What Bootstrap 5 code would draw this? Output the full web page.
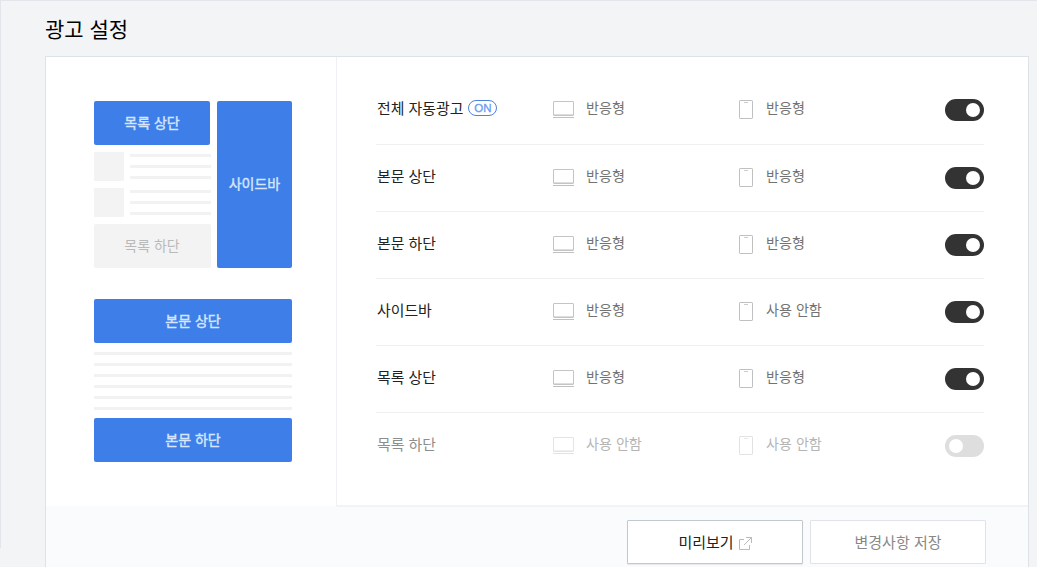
<!DOCTYPE html>
<html lang="ko">
<head>
<meta charset="utf-8">
<meta name="viewport" content="width=device-width, initial-scale=1">
<title>광고 설정</title>
<link href="https://cdn.jsdelivr.net/npm/bootstrap@5.3.0/dist/css/bootstrap.min.css" rel="stylesheet">
<style>
body{background:#f3f4f6;font-family:"Noto Sans CJK KR",sans-serif;color:#333;height:567px;overflow:hidden}
.page-frame{height:548px;border-top:1px solid #e3e5ea;border-left:1px solid #e3e5ea;padding:0 8px 0 44px}
.page-title{font-size:21px;line-height:30px;margin:0;padding:12px 0 13px;color:#000;font-weight:400}
.panel{border:1px solid #dfe1e8;height:530px;background:#fafbfd}
.panel-main{height:449px;background:#fff}
.preview{width:290px;flex:none;padding:44px 44px 0 48px}
.settings{border-left:1px solid #f0f1f4;border-bottom:2px solid #f2f3f5;padding:20px 44px 0 39px;margin-bottom:-1px}
.slot{background:#3e7ee9;color:#d5e6fd;font-size:14px;-webkit-text-stroke:.4px #d5e6fd;border-radius:2px;height:44px;display:flex;align-items:center;justify-content:center;padding-bottom:2px}
.slot.is-off{background:#f3f3f3;color:#b9b9b9;-webkit-text-stroke:0;width:117px;margin-top:7px;padding-right:1px}
.slot-list{width:116px}
.slot-side{width:75px;height:167px}
.post{margin-top:7px;gap:6px}
.thumb{width:30px;height:29px;background:#f3f3f3;border-radius:1px;flex:none}
.text-line{height:3px;background:#f2f2f2}
.post-lines{width:81px;flex:none;gap:8px;padding-top:2px}
.body-lines{gap:8px;padding:9px 0 8px}
.article{padding-top:31px}
.ad-row{height:67px;border-bottom:1px solid #f0f0f2;display:grid;grid-template-columns:176px 186px 1fr auto;align-items:start}
.ad-row:first-child{height:68px}
.ad-row:last-child{border:0}
.ad-name{font-size:14.9px;line-height:22px;padding:20px 0 0 1px;color:#222}
.ad-mode{font-size:14.1px;line-height:22px;padding-top:19px;color:#737373}
.ad-mode svg{flex:none}
.pc-icon{margin:5px 12px 0 1px}
.mo-icon{margin:4px 13px 0 1px}
.on-mark{font:400 11.5px/14px "Liberation Sans",sans-serif;color:#6b9af0;border:1px solid #4d82dc;border-radius:8px;width:29px;height:16px;margin:3px 0 0 5px;text-align:center;-webkit-text-stroke:.3px #6b9af0}
.toggle{appearance:none;width:39px;height:22px;border-radius:11px;background:#dedede;margin:22px 0 0;padding:4px;display:flex}
.toggle::before{content:"";width:14px;height:14px;border-radius:50%;background:#fff}
.toggle:checked{background:#333;justify-content:flex-end}
.is-disabled .ad-name{color:#8e8e8e}
.is-disabled .ad-mode{color:#b5b5b5}
.is-disabled svg{opacity:.45}
.actions{padding:14px 42px 0 0;gap:7px}
.action-btn{width:176px;height:44px;border:1px solid #e1e3e9;border-radius:1px;background:#fff;font-size:15px;line-height:42px;padding:0;color:#888}
.action-btn.is-primary{border-color:#c3c7ce;color:#222;box-shadow:0 1px 1px #e6e8ec}
.ext-icon{margin:2px 0 0 5px}
</style>
</head>
<body>
<svg class="d-none">
  <symbol id="pc" viewBox="0 0 21 18"><rect x=".5" y=".5" width="20" height="14" rx=".5" fill="none" stroke="#c4c4c4"/><path d="M1 13.5h19" stroke="#dedede"/><path d="M0 16.5h21" stroke="#c0c0c0"/></symbol>
  <symbol id="mo" viewBox="0 0 14 19"><rect x=".5" y=".5" width="13" height="18" rx=".6" fill="none" stroke="#c0c0c0"/><path d="M5 2.5h4" stroke="#ccc"/></symbol>
</svg>
<div class="page-frame">
  <h1 class="page-title">광고 설정</h1>
  <main class="panel">
    <div class="panel-main d-flex">
      <section class="preview">
        <div class="d-flex justify-content-between">
          <div class="slot-list">
            <div class="slot">목록 상단</div>
            <div class="post d-flex"><div class="thumb"></div><div class="post-lines d-flex flex-column"><div class="text-line"></div><div class="text-line"></div><div class="text-line"></div></div></div>
            <div class="post d-flex"><div class="thumb"></div><div class="post-lines d-flex flex-column"><div class="text-line"></div><div class="text-line"></div><div class="text-line"></div></div></div>
            <div class="slot is-off">목록 하단</div>
          </div>
          <div class="slot slot-side">사이드바</div>
        </div>
        <div class="article">
          <div class="slot">본문 상단</div>
          <div class="body-lines d-flex flex-column"><div class="text-line"></div><div class="text-line"></div><div class="text-line"></div><div class="text-line"></div><div class="text-line"></div><div class="text-line"></div></div>
          <div class="slot">본문 하단</div>
        </div>
      </section>
      <section class="settings flex-grow-1">
        <div class="ad-row">
          <div class="ad-name d-flex">전체 자동광고<span class="on-mark">ON</span></div>
          <div class="ad-mode d-flex"><svg class="pc-icon" width="21" height="18"><use href="#pc"/></svg>반응형</div>
          <div class="ad-mode d-flex"><svg class="mo-icon" width="14" height="19"><use href="#mo"/></svg>반응형</div>
          <input class="toggle" type="checkbox" checked>
        </div>
        <div class="ad-row">
          <div class="ad-name">본문 상단</div>
          <div class="ad-mode d-flex"><svg class="pc-icon" width="21" height="18"><use href="#pc"/></svg>반응형</div>
          <div class="ad-mode d-flex"><svg class="mo-icon" width="14" height="19"><use href="#mo"/></svg>반응형</div>
          <input class="toggle" type="checkbox" checked>
        </div>
        <div class="ad-row">
          <div class="ad-name">본문 하단</div>
          <div class="ad-mode d-flex"><svg class="pc-icon" width="21" height="18"><use href="#pc"/></svg>반응형</div>
          <div class="ad-mode d-flex"><svg class="mo-icon" width="14" height="19"><use href="#mo"/></svg>반응형</div>
          <input class="toggle" type="checkbox" checked>
        </div>
        <div class="ad-row">
          <div class="ad-name">사이드바</div>
          <div class="ad-mode d-flex"><svg class="pc-icon" width="21" height="18"><use href="#pc"/></svg>반응형</div>
          <div class="ad-mode d-flex"><svg class="mo-icon" width="14" height="19"><use href="#mo"/></svg>사용 안함</div>
          <input class="toggle" type="checkbox" checked>
        </div>
        <div class="ad-row">
          <div class="ad-name">목록 상단</div>
          <div class="ad-mode d-flex"><svg class="pc-icon" width="21" height="18"><use href="#pc"/></svg>반응형</div>
          <div class="ad-mode d-flex"><svg class="mo-icon" width="14" height="19"><use href="#mo"/></svg>반응형</div>
          <input class="toggle" type="checkbox" checked>
        </div>
        <div class="ad-row is-disabled">
          <div class="ad-name">목록 하단</div>
          <div class="ad-mode d-flex"><svg class="pc-icon" width="21" height="18"><use href="#pc"/></svg>사용 안함</div>
          <div class="ad-mode d-flex"><svg class="mo-icon" width="14" height="19"><use href="#mo"/></svg>사용 안함</div>
          <input class="toggle" type="checkbox">
        </div>
      </section>
    </div>
    <div class="actions d-flex justify-content-end">
      <button class="btn action-btn is-primary d-flex align-items-center justify-content-center">미리보기<svg class="ext-icon" width="13" height="13" viewBox="0 0 13 13" fill="none" stroke="#bbb"><path d="M5 2.5H.5v10h10V8M7 .5h5.5V6M12.5.5 5 8"/></svg></button>
      <button class="btn action-btn">변경사항 저장</button>
    </div>
  </main>
</div>
<script src="https://cdn.jsdelivr.net/npm/bootstrap@5.3.0/dist/js/bootstrap.bundle.min.js"></script>
</body>
</html>
